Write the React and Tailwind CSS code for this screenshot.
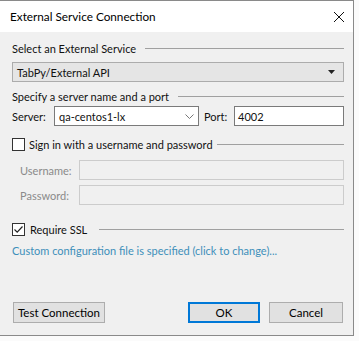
import React from 'react';

function SectionHeader({ children, className = '' }) {
  return (
    <div className={`flex items-center h-[16px] ${className}`}>
      <span className="whitespace-nowrap">{children}</span>
      <div className="flex-1 h-px bg-[#a0a0a0] ml-[9px]" />
    </div>
  );
}

function Checkbox({ checked }) {
  return (
    <div className="w-[13px] h-[13px] border border-[#333] bg-white flex items-center justify-center shrink-0">
      {checked && (
        <svg width="11" height="11" viewBox="0 0 11 11">
          <path d="M1.5 5.5 L4.2 8.2 L9.5 2.5" fill="none" stroke="#222" strokeWidth="1.2" />
        </svg>
      )}
    </div>
  );
}

function Button({ children, primary, className = '' }) {
  return (
    <button
      className={`h-[21px] bg-[#e1e1e1] text-[11.5px] text-black whitespace-nowrap flex items-center justify-center ${
        primary ? 'border-2 border-[#0078d7]' : 'border border-[#adadad]'
      } ${className}`}
    >
      {children}
    </button>
  );
}

export default function App() {
  return (
    <div className="w-[359px] h-[341px] bg-[#fbfbfb] font-['Lato',sans-serif] text-[11px] text-[#111] leading-none">
      <div className="w-[354px] h-[336px] border-t border-r border-b border-[#8a8a8a] flex flex-col">
        {/* Title bar */}
        <div className="h-[31px] bg-white flex items-center justify-between pl-[10px] pr-[8px]">
          <span className="text-[11.75px] text-black">External Service Connection</span>
          <svg width="12" height="12" viewBox="0 0 12 12">
            <path d="M1 1 L11 11 M11 1 L1 11" stroke="#111" strokeWidth="1" />
          </svg>
        </div>

        {/* Body */}
        <div className="flex-1 bg-[#f0f0f0] pl-[12px] pr-[9px] pt-[8px] pb-[12px] flex flex-col">
          <SectionHeader>Select an External Service</SectionHeader>

          <div className="mt-[6px] h-[20px] bg-[#e5e5e5] border border-[#acacac] flex items-center justify-between pl-[4px] pr-[8px]">
            <span>TabPy/External API</span>
            <svg width="7" height="4" viewBox="0 0 7 4">
              <path d="M0 0 L7 0 L3.5 4 Z" fill="#222" />
            </svg>
          </div>

          <SectionHeader className="mt-[6px]">Specify a server name and a port</SectionHeader>

          <div className="mt-[2px] flex items-center h-[20px]">
            <span className="w-[42px] whitespace-nowrap">Server:</span>
            <div className="w-[145px] h-[20px] bg-white border border-[#7a7a7a] flex items-center justify-between pl-[4px] pr-[4px]">
              <span>qa-centos1-lx</span>
              <svg width="9" height="5" viewBox="0 0 9 5">
                <path d="M0.5 0.5 L4.5 4.5 L8.5 0.5" fill="none" stroke="#777" strokeWidth="1" />
              </svg>
            </div>
            <span className="ml-[5px] w-[30px] whitespace-nowrap">Port:</span>
            <div className="flex-1 h-[20px] bg-white border border-[#7a7a7a] flex items-center pl-[3px]">
              4002
            </div>
          </div>

          <div className="mt-[10px] flex items-center h-[16px]">
            <Checkbox />
            <span className="ml-[4px] whitespace-nowrap">Sign in with a username and password</span>
            <div className="flex-1 h-px bg-[#a0a0a0] ml-[4px]" />
          </div>

          <div className="mt-[8px] flex items-center h-[20px]">
            <span className="w-[67px] shrink-0 pl-[8px] text-[#8a8a8a] whitespace-nowrap">Username:</span>
            <div className="flex-1 h-[20px] bg-[#f0f0f0] border border-[#cccccc]" />
          </div>
          <div className="mt-[5px] flex items-center h-[20px]">
            <span className="w-[67px] shrink-0 pl-[8px] text-[#8a8a8a] whitespace-nowrap">Password:</span>
            <div className="flex-1 h-[20px] bg-[#f0f0f0] border border-[#cccccc]" />
          </div>

          <div className="mt-[16px] flex items-center h-[16px]">
            <Checkbox checked />
            <span className="ml-[5px] whitespace-nowrap">Require SSL</span>
            <div className="flex-1 h-px bg-[#a0a0a0] ml-[12px]" />
          </div>

          <div className="mt-[6px] h-[14px] flex items-center text-[#3d8fba] whitespace-nowrap">
            Custom configuration file is specified (click to change)...
          </div>

          <div className="mt-auto flex items-center">
            <Button className="w-[92px] ml-[1px]">Test Connection</Button>
            <Button primary className="w-[72px] ml-auto">OK</Button>
            <Button className="w-[74px] ml-[9px] mr-[1px]">Cancel</Button>
          </div>
        </div>
      </div>
    </div>
  );
}
